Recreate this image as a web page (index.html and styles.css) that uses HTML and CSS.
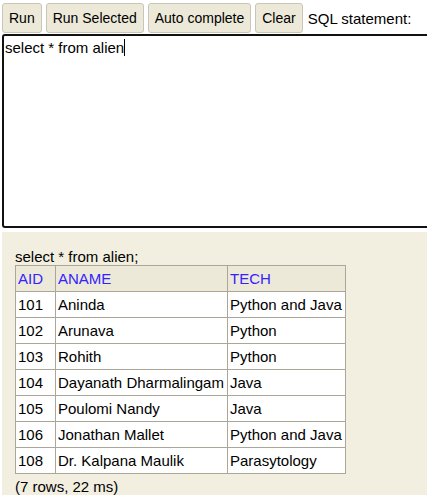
FILE: index.html
```html
<!DOCTYPE html>
<html>
<head>
<meta charset="utf-8">
<link rel="stylesheet" href="styles.css">
</head>
<body>
<div class="toolbar">
  <button class="btn">Run</button>
  <button class="btn">Run Selected</button>
  <button class="btn">Auto complete</button>
  <button class="btn">Clear</button>
  <span class="label">SQL statement:</span>
</div>
<div class="editor">select * from alien<span class="caret"></span></div>
<div class="result">
  <div class="query">select * from alien;</div>
  <table class="grid">
    <colgroup><col class="c1"><col class="c2"><col class="c3"></colgroup>
    <thead>
      <tr><th>AID</th><th>ANAME</th><th>TECH</th></tr>
    </thead>
    <tbody>
      <tr><td>101</td><td>Aninda</td><td>Python and Java</td></tr>
      <tr><td>102</td><td>Arunava</td><td>Python</td></tr>
      <tr><td>103</td><td>Rohith</td><td>Python</td></tr>
      <tr><td>104</td><td>Dayanath Dharmalingam</td><td>Java</td></tr>
      <tr><td>105</td><td>Poulomi Nandy</td><td>Java</td></tr>
      <tr><td>106</td><td>Jonathan Mallet</td><td>Python and Java</td></tr>
      <tr><td>108</td><td>Dr. Kalpana Maulik</td><td>Parasytology</td></tr>
    </tbody>
  </table>
  <div class="stats">(7 rows, 22 ms)</div>
</div>
</body>
</html>
```
FILE: styles.css
```css
html, body {
  margin: 0;
  padding: 0;
  overflow: hidden;
  background: #ffffff;
  font-family: "Liberation Sans", Arial, sans-serif;
  color: #000;
}
body {
  padding: 3px 0 0 2px;
  height: 495px;
  box-sizing: border-box;
}
.toolbar {
  display: flex;
  align-items: center;
  gap: 4px;
  height: 30px;
}
.btn {
  height: 30px;
  margin: 0;
  padding: 0 6px;
  font-family: "Liberation Sans", Arial, sans-serif;
  font-size: 14px;
  color: #000;
  background: #ece9d8;
  border: 1px solid #c9c5b8;
  border-radius: 3px;
}
.label {
  font-size: 15px;
  margin-left: 1px;
}
.editor {
  box-sizing: border-box;
  margin-top: 1px;
  width: 440px;
  height: 194px;
  border: 2px solid #111;
  border-radius: 3px;
  padding: 3px 1px;
  font-size: 15px;
  line-height: 17px;
  background: #fff;
}
.caret {
  display: inline-block;
  width: 1px;
  height: 17px;
  background: #000;
  vertical-align: top;
}
.result {
  box-sizing: border-box;
  margin-top: 4px;
  background: #f2efe0;
  padding: 16px 13px 0;
  height: 263px;
  font-size: 15px;
}
.query {
  line-height: 17px;
}
.grid {
  border-collapse: collapse;
  border: 1px solid #aaa698;
  font-size: 15px;
}
.c1 { width: 40px; }
.c2 { width: 172px; }
.c3 { width: 118px; }
.grid th, .grid td {
  border: 1px solid #aaa698;
  height: 26px;
  padding: 0 2px;
  text-align: left;
  white-space: nowrap;
  box-sizing: border-box;
}
.grid th {
  background: #ece9d8;
  color: #3323ff;
  font-weight: normal;
}
.grid td {
  background: #ffffff;
}
.stats {
  margin-top: 4px;
  line-height: 17px;
}
```
